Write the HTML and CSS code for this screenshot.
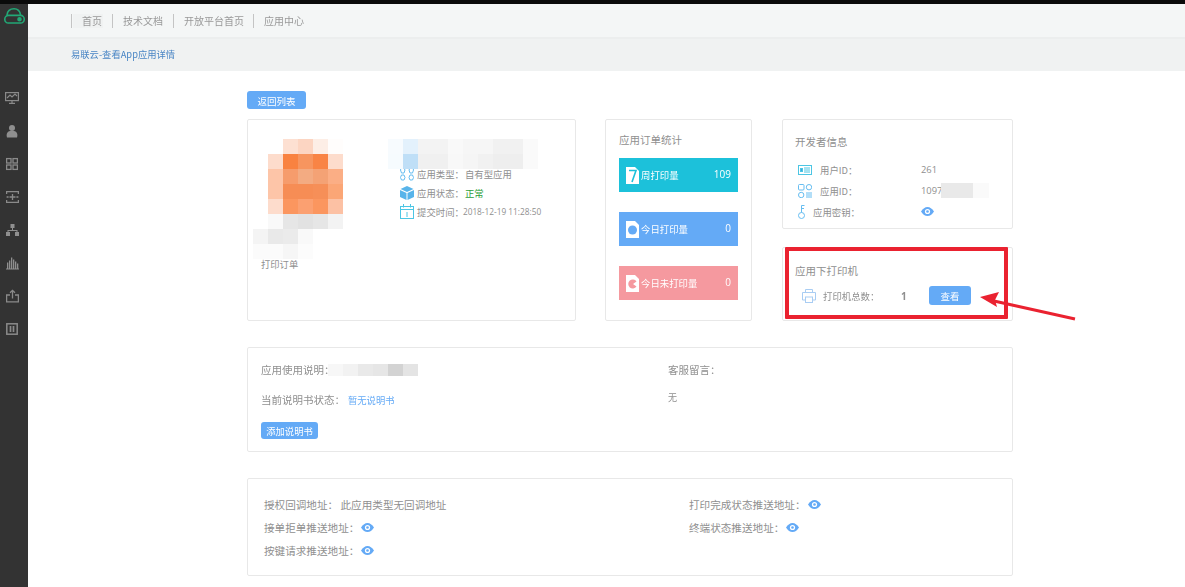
FILE: index.html
```html
<!DOCTYPE html>
<html lang="zh">
<head>
<meta charset="utf-8">
<title>易联云-查看App应用详情</title>
<link rel="stylesheet" href="styles.css">
</head>
<body>
<svg class="defs" width="0" height="0" aria-hidden="true">
  <symbol id="eye" viewBox="0 0 13 9">
    <path d="M0 4.5C2 1.5 4 0 6.5 0S11 1.5 13 4.5C11 7.5 9 9 6.5 9S2 7.5 0 4.5Z" fill="#64aaf6"/>
    <circle cx="6.5" cy="4.5" r="2.6" fill="#fff"/>
    <circle cx="6.5" cy="4.5" r="1.3" fill="#64aaf6"/>
  </symbol>
</svg>
<div class="blackbar"></div>
<div class="app">
  <aside class="sidebar">
    <svg class="logo" width="21" height="16" viewBox="0 0 21 16" fill="none" stroke="#22a876" stroke-width="1.6">
      <path d="M3 7C3.500 3 6.500 .8 10 .8c3.500 0 6 2.200 6.500 6.200"/>
      <rect x=".8" y="7.400" width="19.400" height="7.600" rx="3.600"/>
      <circle cx="15.500" cy="11.200" r="1.500" fill="#22a876"/>
    </svg>
    <nav class="side-icons">
      <svg width="14" height="12" viewBox="0 0 14 12" fill="none" stroke="#8a8a8a" stroke-width="1.2"><rect x=".6" y=".6" width="12.800" height="8"/><path d="M2 6l3-3 2 2 3-3 2 2M7 9v2M4 11.400h6"/></svg>
      <svg width="12" height="13" viewBox="0 0 12 13" fill="#8f8f8f"><circle cx="6" cy="3.400" r="3"/><path d="M1 13c-1-3 0-6 3-6.400h4c3 .4 4 3.400 3 6.400Z"/></svg>
      <svg width="12" height="12" viewBox="0 0 12 12" fill="none" stroke="#8a8a8a" stroke-width="1.300"><rect x=".6" y=".6" width="4.400" height="4.400"/><rect x="7" y=".6" width="4.400" height="4.400"/><rect x=".6" y="7" width="4.400" height="4.400"/><rect x="7" y="7" width="4.400" height="4.400"/></svg>
      <svg width="13" height="12" viewBox="0 0 13 12" fill="none" stroke="#8a8a8a" stroke-width="1.300"><path d="M.6 3V.6h11.800V3M.6 9v2.400h11.800V9M.6 6h2M10.400 6h2M6.500 3v6M3.500 6h6"/></svg>
      <svg width="13" height="12" viewBox="0 0 13 12" fill="#8f8f8f"><rect x="4.500" y="0" width="4" height="4"/><rect x="0" y="8" width="4" height="4"/><rect x="9" y="8" width="4" height="4"/><path d="M6 4h1v2h4.500v2h-1V7H2.500v1h-1V6H6Z"/></svg>
      <svg width="13" height="13" viewBox="0 0 13 13" fill="#8f8f8f"><path d="M1 12V6h1.300v6ZM3 12V4h1.300v8ZM5 12V1h1.300v11ZM7 12V3h1.300v9ZM9 12V5h1.300v7ZM11 12V7h1.300v5ZM0 12h13v1H0Z"/></svg>
      <svg width="13" height="13" viewBox="0 0 13 13" fill="none" stroke="#8a8a8a" stroke-width="1.300"><path d="M4 5.500H.6v6.900h11.800V5.500H9M6.500 9V1M4 3.200 6.500.8 9 3.200"/></svg>
      <svg width="12" height="12" viewBox="0 0 12 12" fill="none" stroke="#8a8a8a" stroke-width="1.500"><rect x=".8" y=".8" width="10.400" height="10.400"/><path d="M4.500 3v6M7.500 3v6" stroke-width="1.700"/></svg>
    </nav>
  </aside>
  <div class="main">
    <nav class="topnav">
      <a class="nav-item nav-active">首页</a>
      <a class="nav-item">技术文档</a>
      <a class="nav-item nav-wide">开放平台首页</a>
      <a class="nav-item">应用中心</a>
    </nav>
    <div class="crumb">易联云-查看App应用详情</div>
    <main class="content">
      <div class="toolbar"><button class="btn btn-back">返回列表</button></div>
      <section class="top-grid">
        <article class="card app-card">
          <div class="app-left"><span class="app-name">打印订单</span></div>
          <ul class="app-info">
            <li><svg class="ic" width="14" height="14" viewBox="0 0 14 14" fill="none" stroke="#66bdf0"><path d="M1 1h3l1 2-1 3H1.500L.5 3ZM10 1h3l.5 2-1 3H10L9 3ZM1.500 8H4l1 2.500L4 13H1.500L.5 10.500ZM10 8h2.500l1 2.500-1 2.500H10l-1-2.500Z"/></svg><span>应用类型：</span><span class="val">自有型应用</span></li>
            <li><svg class="ic" width="14" height="14" viewBox="0 0 14 14" fill="#58b4ea"><path d="M7 0 13.500 3 7 6 .5 3Z"/><path d="M0 4l6.500 3v7L0 11ZM14 4 7.500 7v7L14 11Z"/></svg><span>应用状态：</span><span class="ok">正常</span></li>
            <li><svg class="ic" width="14" height="15" viewBox="0 0 14 15" fill="none" stroke="#4cc6e4"><rect x=".5" y="2.500" width="13" height="12"/><path d="M.5 5.500h13M3.500 0v3.500M10.500 0v3.500M7 8v5" stroke-width="1"/></svg><span>提交时间：</span><span class="time">2018-12-19 11:28:50</span></li>
          </ul>
          <svg class="mosaic mosaic-logo" width="120" height="120" viewBox="0 0 8 8" shape-rendering="crispEdges">
            <rect x="2" y="0" width="1" height="1" fill="#fde0d2"/><rect x="3" y="0" width="1" height="1" fill="#fcd5c2"/><rect x="4" y="0" width="1" height="1" fill="#fdeee6"/><rect x="5" y="0" width="1" height="1" fill="#fffdfc"/>
            <rect x="1" y="1" width="1" height="1" fill="#fddccc"/><rect x="2" y="1" width="1" height="1" fill="#f98240"/><rect x="3" y="1" width="1" height="1" fill="#f7955f"/><rect x="4" y="1" width="1" height="1" fill="#f98445"/><rect x="5" y="1" width="1" height="1" fill="#fddccc"/>
            <rect x="1" y="2" width="1" height="1" fill="#fdc5a8"/><rect x="2" y="2" width="1" height="1" fill="#f69c6c"/><rect x="3" y="2" width="1" height="1" fill="#f3ab82"/><rect x="4" y="2" width="1" height="1" fill="#f4a275"/><rect x="5" y="2" width="1" height="1" fill="#fbae85"/>
            <rect x="1" y="3" width="1" height="1" fill="#fdc5a8"/><rect x="2" y="3" width="1" height="1" fill="#f68d55"/><rect x="3" y="3" width="1" height="1" fill="#f68d55"/><rect x="4" y="3" width="1" height="1" fill="#f68f58"/><rect x="5" y="3" width="1" height="1" fill="#fba676"/>
            <rect x="1" y="4" width="1" height="1" fill="#fddccc"/><rect x="2" y="4" width="1" height="1" fill="#fb965f"/><rect x="3" y="4" width="1" height="1" fill="#fba071"/><rect x="4" y="4" width="1" height="1" fill="#fb965f"/><rect x="5" y="4" width="1" height="1" fill="#fcc1a4"/>
            <rect x="1" y="5" width="1" height="1" fill="#f9f9f9"/><rect x="2" y="5" width="1" height="1" fill="#e6e6e6"/><rect x="3" y="5" width="1" height="1" fill="#e2e2e2"/><rect x="4" y="5" width="1" height="1" fill="#e6e6e6"/><rect x="5" y="5" width="1" height="1" fill="#f3f3f3"/>
            <rect x="0" y="6" width="1" height="1" fill="#f4f4f4"/><rect x="1" y="6" width="1" height="1" fill="#e9e9e9"/><rect x="2" y="6" width="1" height="1" fill="#ebebeb"/><rect x="3" y="6" width="1" height="1" fill="#f9f9f9"/>
            <rect x="0" y="7" width="1" height="1" fill="#fbfbfb"/><rect x="1" y="7" width="1" height="1" fill="#fbfbfb"/><rect x="2" y="7" width="1" height="1" fill="#f6f6f6"/><rect x="3" y="7" width="1" height="1" fill="#fcfcfc"/>
          </svg>
          <svg class="mosaic mosaic-title" width="150" height="30" viewBox="0 0 10 2" shape-rendering="crispEdges">
            <rect x="0" y="0" width="1" height="1" fill="#f7fbfe"/><rect x="1" y="0" width="1" height="1" fill="#e3f1fc"/><rect x="2" y="0" width="2" height="1" fill="#f3f3f3"/><rect x="4" y="0" width="1" height="1" fill="#f9f9f9"/><rect x="5" y="0" width="2" height="1" fill="#f6f6f6"/><rect x="7" y="0" width="2" height="1" fill="#f1f1f1"/><rect x="9" y="0" width="1" height="1" fill="#fafafa"/>
            <rect x="0" y="1" width="1" height="1" fill="#f6fbfe"/><rect x="1" y="1" width="1" height="1" fill="#bfdff7"/><rect x="2" y="1" width="2" height="1" fill="#f0f0f0"/><rect x="4" y="1" width="1" height="1" fill="#f8f8f8"/><rect x="5" y="1" width="1" height="1" fill="#f5f5f5"/><rect x="6" y="1" width="1" height="1" fill="#f1f1f1"/><rect x="7" y="1" width="2" height="1" fill="#eeeeee"/><rect x="9" y="1" width="1" height="1" fill="#fafafa"/>
          </svg>
        </article>

        <article class="card stats-card">
          <h3 class="card-title">应用订单统计</h3>
          <div class="stat stat-cyan">
            <svg class="stat-ic" width="13" height="17" viewBox="0 0 13 17"><path d="M0 0h9l4 4v13H0Z" fill="#fff"/><path d="M3 3.500h7L6 15" fill="none" stroke="#1cc1da" stroke-width="1.600"/></svg>
            <span class="stat-label">周打印量</span><span class="stat-val">109</span>
          </div>
          <div class="stat stat-blue">
            <svg class="stat-ic" width="13" height="17" viewBox="0 0 13 17"><path d="M0 0h9l4 4v13H0Z" fill="#fff"/><circle cx="6.500" cy="9" r="4.500" fill="#64aaf6"/></svg>
            <span class="stat-label">今日打印量</span><span class="stat-val">0</span>
          </div>
          <div class="stat stat-red">
            <svg class="stat-ic" width="13" height="17" viewBox="0 0 13 17"><path d="M0 0h9l4 4v13H0Z" fill="#fff"/><path d="M10.500 6.500A4.500 4.500 0 1 0 10.500 11.500L7 9Z" fill="#f5999f"/></svg>
            <span class="stat-label">今日未打印量</span><span class="stat-val">0</span>
          </div>
        </article>

        <div class="right-col">
          <article class="card dev-card">
            <h3 class="card-title">开发者信息</h3>
            <div class="dev-row">
              <svg class="dev-ic" width="14" height="10" viewBox="0 0 14 10" fill="none" stroke="#4cc6e4"><rect x=".5" y=".5" width="13" height="9"/><rect x="2.500" y="3.500" width="2" height="3" fill="#3aa6e0"/><path d="M6 3h6M6 5h6M6 7h6"/></svg>
              <span class="dev-label">用户ID：</span><span class="dev-val">261</span>
            </div>
            <div class="dev-row">
              <svg class="dev-ic" width="14" height="14" viewBox="0 0 14 14" fill="none" stroke="#66bdf0"><rect x=".5" y=".5" width="5.500" height="5.500" rx="1"/><circle cx="11" cy="3.200" r="2.700"/><circle cx="3.200" cy="11" r="2.700"/><path d="M8 9h6M8 11h6M8 13h6"/></svg>
              <span class="dev-label">应用ID：</span><span class="dev-val">1097</span>
              <svg class="mosaic mosaic-id" width="48" height="15" viewBox="0 0 3 1" preserveAspectRatio="none" shape-rendering="crispEdges"><rect x="0" y="0" width="2" height="1" fill="#e9e9e9"/><rect x="2" y="0" width="1" height="1" fill="#fafafa"/></svg>
            </div>
            <div class="dev-row">
              <svg class="dev-ic key-ic" width="7" height="14" viewBox="0 0 7 14" fill="none" stroke="#66bdf0"><circle cx="3.500" cy="10.500" r="3"/><path d="M3.500 7.500V.5h3M3.500 3.500h2.500"/></svg>
              <span class="dev-label key-label">应用密钥：</span><svg class="eye" width="13" height="9"><use href="#eye"/></svg>
            </div>
          </article>
          <article class="card printer-card">
            <h3 class="card-title">应用下打印机</h3>
            <div class="printer-row">
              <svg class="printer-ic" width="14" height="14" viewBox="0 0 14 14" fill="none" stroke="#a9cdf3"><path d="M3.500 3.500V.5h7v3M3.500 11H.5V3.500h13V11h-3"/><rect x="3.500" y="8" width="7" height="5.500"/></svg>
              <span class="printer-label">打印机总数：</span>
              <span class="printer-val">1</span>
              <button class="btn btn-view">查看</button>
            </div>
          </article>
        </div>
      </section>

      <section class="card doc-card">
        <div class="doc-col doc-left">
          <div class="doc-head">应用使用说明：</div>
          <div class="doc-status">当前说明书状态：<a class="doc-link">暂无说明书</a></div>
          <button class="btn btn-add">添加说明书</button>
          <svg class="mosaic mosaic-doc" width="90" height="12" viewBox="0 0 6 1" preserveAspectRatio="none" shape-rendering="crispEdges"><rect x="0" y="0" width="1" height="1" fill="#f7f7f7"/><rect x="1" y="0" width="1" height="1" fill="#f2f2f2"/><rect x="2" y="0" width="1" height="1" fill="#e9e9e9"/><rect x="3" y="0" width="1" height="1" fill="#e6e6e6"/><rect x="4" y="0" width="1" height="1" fill="#d3d3d3"/><rect x="5" y="0" width="1" height="1" fill="#e4e4e4"/></svg>
        </div>
        <div class="doc-col">
          <div class="doc-head">客服留言：</div>
          <div class="doc-none">无</div>
        </div>
      </section>

      <section class="card push-card">
        <div class="push-col">
          <div class="push-row">授权回调地址： 此应用类型无回调地址</div>
          <div class="push-row">接单拒单推送地址：<svg class="eye" width="13" height="9"><use href="#eye"/></svg></div>
          <div class="push-row">按键请求推送地址：<svg class="eye" width="13" height="9"><use href="#eye"/></svg></div>
        </div>
        <div class="push-col">
          <div class="push-row">打印完成状态推送地址：<svg class="eye" width="13" height="9"><use href="#eye"/></svg></div>
          <div class="push-row">终端状态推送地址：<svg class="eye" width="13" height="9"><use href="#eye"/></svg></div>
        </div>
      </section>
    </main>
  </div>
</div>
<div class="annot-box"></div>
<svg class="annot-arrow" width="100" height="32" viewBox="0 0 100 32">
  <path d="M95 27 14 9" stroke="#ea2230" stroke-width="3" fill="none"/>
  <path d="M0 5 19 0 15 8 17 15Z" fill="#ea2230"/>
</svg>
</body>
</html>
```

FILE: styles.css
```css
* { box-sizing: border-box; }
html, body { margin: 0; height: 100%; overflow: hidden; background: #fff; }
body {
  position: relative;
  height: 587px;
  font-family: "Noto Sans CJK TC", "Open Sans", sans-serif;
  font-size: 10.5px;
  color: #8f8f8f;
}
ul, h3 { margin: 0; padding: 0; list-style: none; font-weight: 400; }
svg { display: block; flex: none; }
.defs { position: absolute; }

.blackbar { height: 4px; background: #0a0a0a; }
.app { display: flex; height: 583px; filter: blur(.45px); }

.sidebar { width: 28px; flex: none; background: #333; padding: 4px 4px 0 0; display: flex; flex-direction: column; align-items: center; }
.logo { margin-left: 4px; }
.side-icons { margin-top: 67px; display: flex; flex-direction: column; align-items: center; }
.side-icons svg { height: 14px; margin-bottom: 19px; }

.main { flex: 1; min-width: 0; }
.topnav { height: 35px; background: #f4f6f6; border-bottom: 2px solid #eceeee; padding: 10px 0 0 43px; display: flex; align-items: flex-start; }
.nav-item { height: 14px; line-height: 14px; padding: 0 10px; border-left: 1px solid #c4c4c4; font-size: 10px; color: #999; }
.nav-wide { padding-right: 9px; }
.nav-active { background: linear-gradient(#f0f2f2, #f0f2f2) no-repeat 1px 0 / 30px 14px; }
.crumb { height: 32px; background: #f0f2f2; padding-left: 43px; line-height: 31px; font-size: 9.3px; color: #4a86c5; }

.content { width: 766px; margin-left: 219px; padding-top: 20px; }
.toolbar { height: 28px; }
.btn { display: block; border: 0; padding: 0; background: #64aaf6; color: #fff; font: inherit; text-align: center; }
.btn-back { width: 59px; height: 18px; line-height: 20px; font-size: 9.5px; border-radius: 3px; }
.card { background: #fff; border: 1px solid #e8e8e8; border-radius: 2px; position: relative; }

.top-grid { display: grid; grid-template-columns: 329px 147px 232px; column-gap: 29px; height: 202px; }
.mosaic { position: absolute; }
.app-card { display: flex; }
.app-left { width: 152px; padding: 137px 0 0 13px; }
.app-name { font-size: 9.3px; line-height: 14px; display: block; }
.app-info { padding-top: 44px; font-size: 9.4px; }
.app-info li { display: flex; align-items: center; height: 19px; }
.ic { margin-right: 3px; }
.val { margin-left: 1px; }
.ok { color: #2c9e3a; margin-left: 1px; }
.time { font-family: "Open Sans", sans-serif; font-size: 8.3px; margin-left: -1px; }
.mosaic-logo { left: 5px; top: 19px; }
.mosaic-title { left: 140px; top: 19px; }

.card-title { font-size: 10.5px; line-height: 14px; color: #8f8f8f; }
.stats-card { padding: 13px 13px 0; }
.stats-card .card-title { margin-bottom: 11px; }
.stat { height: 34px; margin-bottom: 20px; display: flex; align-items: center; padding: 0 7px; color: #fff; font-size: 9.4px; }
.stat-ic { margin-right: 2px; }
.stat-val { margin-left: auto; font-family: "Open Sans", sans-serif; font-size: 10px; margin-top: -3px; }
.stat-cyan { background: #1cc1da; }
.stat-blue { background: #64aaf6; }
.stat-red { background: #f5999f; }

.right-col { display: flex; flex-direction: column; gap: 18px; margin-left: 1px; }
.dev-card { height: 110px; padding: 15px 12px 0; }
.dev-card .card-title { margin-bottom: 10px; }
.dev-row { position: relative; display: flex; align-items: center; height: 21px; padding-left: 3px; font-size: 9.4px; }
.dev-ic { width: 14px; margin-right: 8px; }
.dev-label { width: 101px; }
.dev-val { font-family: "Open Sans", sans-serif; font-size: 9.4px; }
.key-ic { width: 7px; margin-right: 8px; }
.key-label { width: 108px; }
.mosaic-id { left: 146px; top: 3px; }

.printer-card { height: 74px; padding: 16px 12px 0; }
.printer-row { display: flex; align-items: center; margin-top: 8px; height: 19px; padding-left: 7px; font-size: 9.4px; }
.printer-ic { margin-right: 7px; }
.printer-label { width: 78px; }
.printer-val { width: 28px; font-family: "Open Sans", sans-serif; font-weight: 700; font-size: 10px; }
.btn-view { width: 42px; height: 19px; line-height: 20px; font-size: 9.5px; border-radius: 3px; }

.doc-card { margin-top: 26px; height: 105px; display: grid; grid-template-columns: 407px 1fr; padding: 15px 13px 0; }
.doc-col { position: relative; }
.doc-head { line-height: 14px; font-size: 10.5px; }
.doc-status { margin-top: 16px; line-height: 14px; font-size: 10.5px; }
.doc-link { color: #64aaf6; font-size: 9.3px; margin-left: 3px; }
.btn-add { width: 57px; height: 17px; line-height: 18px; margin-top: 15px; font-size: 9.3px; border-radius: 3px; }
.doc-none { margin-top: 14px; font-size: 9px; line-height: 14px; }
.mosaic-doc { left: 67px; top: 1px; }

.push-card { margin-top: 26px; height: 98px; display: grid; grid-template-columns: 425px 1fr; padding: 14px 16px 0; }
.push-row { display: flex; align-items: center; height: 23px; font-size: 10.6px; white-space: pre; }
.push-row .eye { margin-left: 2px; }

.annot-box { position: absolute; left: 785px; top: 247px; width: 223px; height: 72px; border: 4px solid #ea2230; border-radius: 1px; }
.annot-arrow { position: absolute; left: 980px; top: 292px; }
```
